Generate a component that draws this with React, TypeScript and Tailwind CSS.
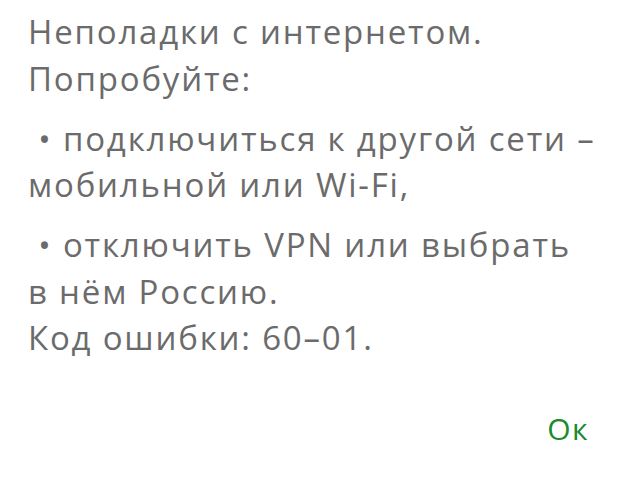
export default function App() {
  return (
    <div className="w-[640px] h-[484px] bg-white flex flex-col font-['Open_Sans',sans-serif] text-[33px] leading-[46.5px] tracking-[1.8px] text-[#6b6b6b] pl-[28px] pt-[9px]">
      <div>Неполадки с интернетом.</div>
      <div>Попробуйте:</div>
      <div className="mt-[13.5px]">&nbsp;• подключиться к другой сети –</div>
      <div>мобильной или Wi-Fi,</div>
      <div className="mt-[13.5px]">&nbsp;• отключить VPN или выбрать</div>
      <div>в нём Россию.</div>
      <div>Код ошибки: 60–01.</div>
      <div className="flex-1 flex items-start justify-end pr-[51px] pt-[44px]">
        <button className="text-[30px] text-[#1b8a2f] tracking-[1.5px]">Ок</button>
      </div>
    </div>
  );
}
